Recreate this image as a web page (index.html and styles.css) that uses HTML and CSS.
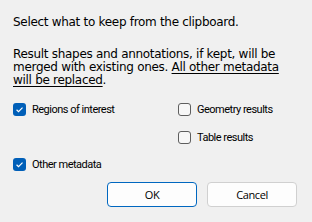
FILE: index.html
```html
<!DOCTYPE html>
<html lang="en">
<head>
  <meta charset="UTF-8">
  <title>Paste from clipboard</title>
  <link rel="stylesheet" href="styles.css">
</head>
<body>
  <div class="dialog">
    <p class="intro">Select what to keep from the clipboard.</p>
    <p class="note">
      Result shapes and annotations, if kept, will be<br>
      merged with existing ones. <u>All other metadata<br>
      will be replaced</u>.
    </p>

    <div class="options">
      <label class="check">
        <span class="box checked">
          <svg viewBox="0 0 12 12"><path d="M3.3 6.2 L5.1 8 L8.8 4.3" /></svg>
        </span>
        Regions of interest
      </label>
      <label class="check">
        <span class="box"></span>
        Geometry results
      </label>
      <span></span>
      <label class="check">
        <span class="box"></span>
        Table results
      </label>
      <label class="check">
        <span class="box checked">
          <svg viewBox="0 0 12 12"><path d="M3.3 6.2 L5.1 8 L8.8 4.3" /></svg>
        </span>
        Other metadata
      </label>
    </div>

    <div class="buttons">
      <button class="btn default">OK</button>
      <button class="btn">Cancel</button>
    </div>
  </div>
</body>
</html>
```

FILE: styles.css
```css
body {
  margin: 0;
  padding: 0;
  background-color: #f0f0f0;
  color: #000;
}

.dialog {
  width: 312px;
  height: 222px;
  box-sizing: border-box;
  padding: 16px 15px 0 13px;
}

.intro, .note {
  margin: 0;
  font-family: "DejaVu Sans", sans-serif;
  font-size: 12px;
  line-height: 13px;
  letter-spacing: -0.3px;
}
.note {
  margin-top: 19px;
}
.note u {
  text-underline-offset: 2px;
}

.options {
  display: grid;
  grid-template-columns: 165px auto;
  grid-auto-rows: 13px;
  row-gap: 14.5px;
  margin-top: 16px;
  font-family: Roboto, sans-serif;
  font-size: 11px;
  letter-spacing: -0.5px;
}
.check {
  display: flex;
  align-items: center;
  gap: 6px;
}
.box {
  width: 13px;
  height: 13px;
  box-sizing: border-box;
  border: 1px solid #5e5e5e;
  border-radius: 3px;
  background-color: #f7f7f7;
  display: flex;
}
.box.checked {
  border: none;
  background-color: #005fb8;
}
.box svg {
  width: 13px;
  height: 13px;
}
.box svg path {
  fill: none;
  stroke: #fff;
  stroke-width: 1.1;
}

.buttons {
  display: flex;
  justify-content: flex-end;
  gap: 10px;
  margin-top: 11px;
}
.btn {
  width: 90px;
  height: 25px;
  border: 1px solid #d0d0d0;
  border-radius: 4px;
  background-color: #fdfdfd;
  font-family: "Open Sans", sans-serif;
  font-size: 11px;
  letter-spacing: -0.4px;
  color: #000;
  padding: 0;
}
.btn.default {
  border-color: #0067c0;
}
```
